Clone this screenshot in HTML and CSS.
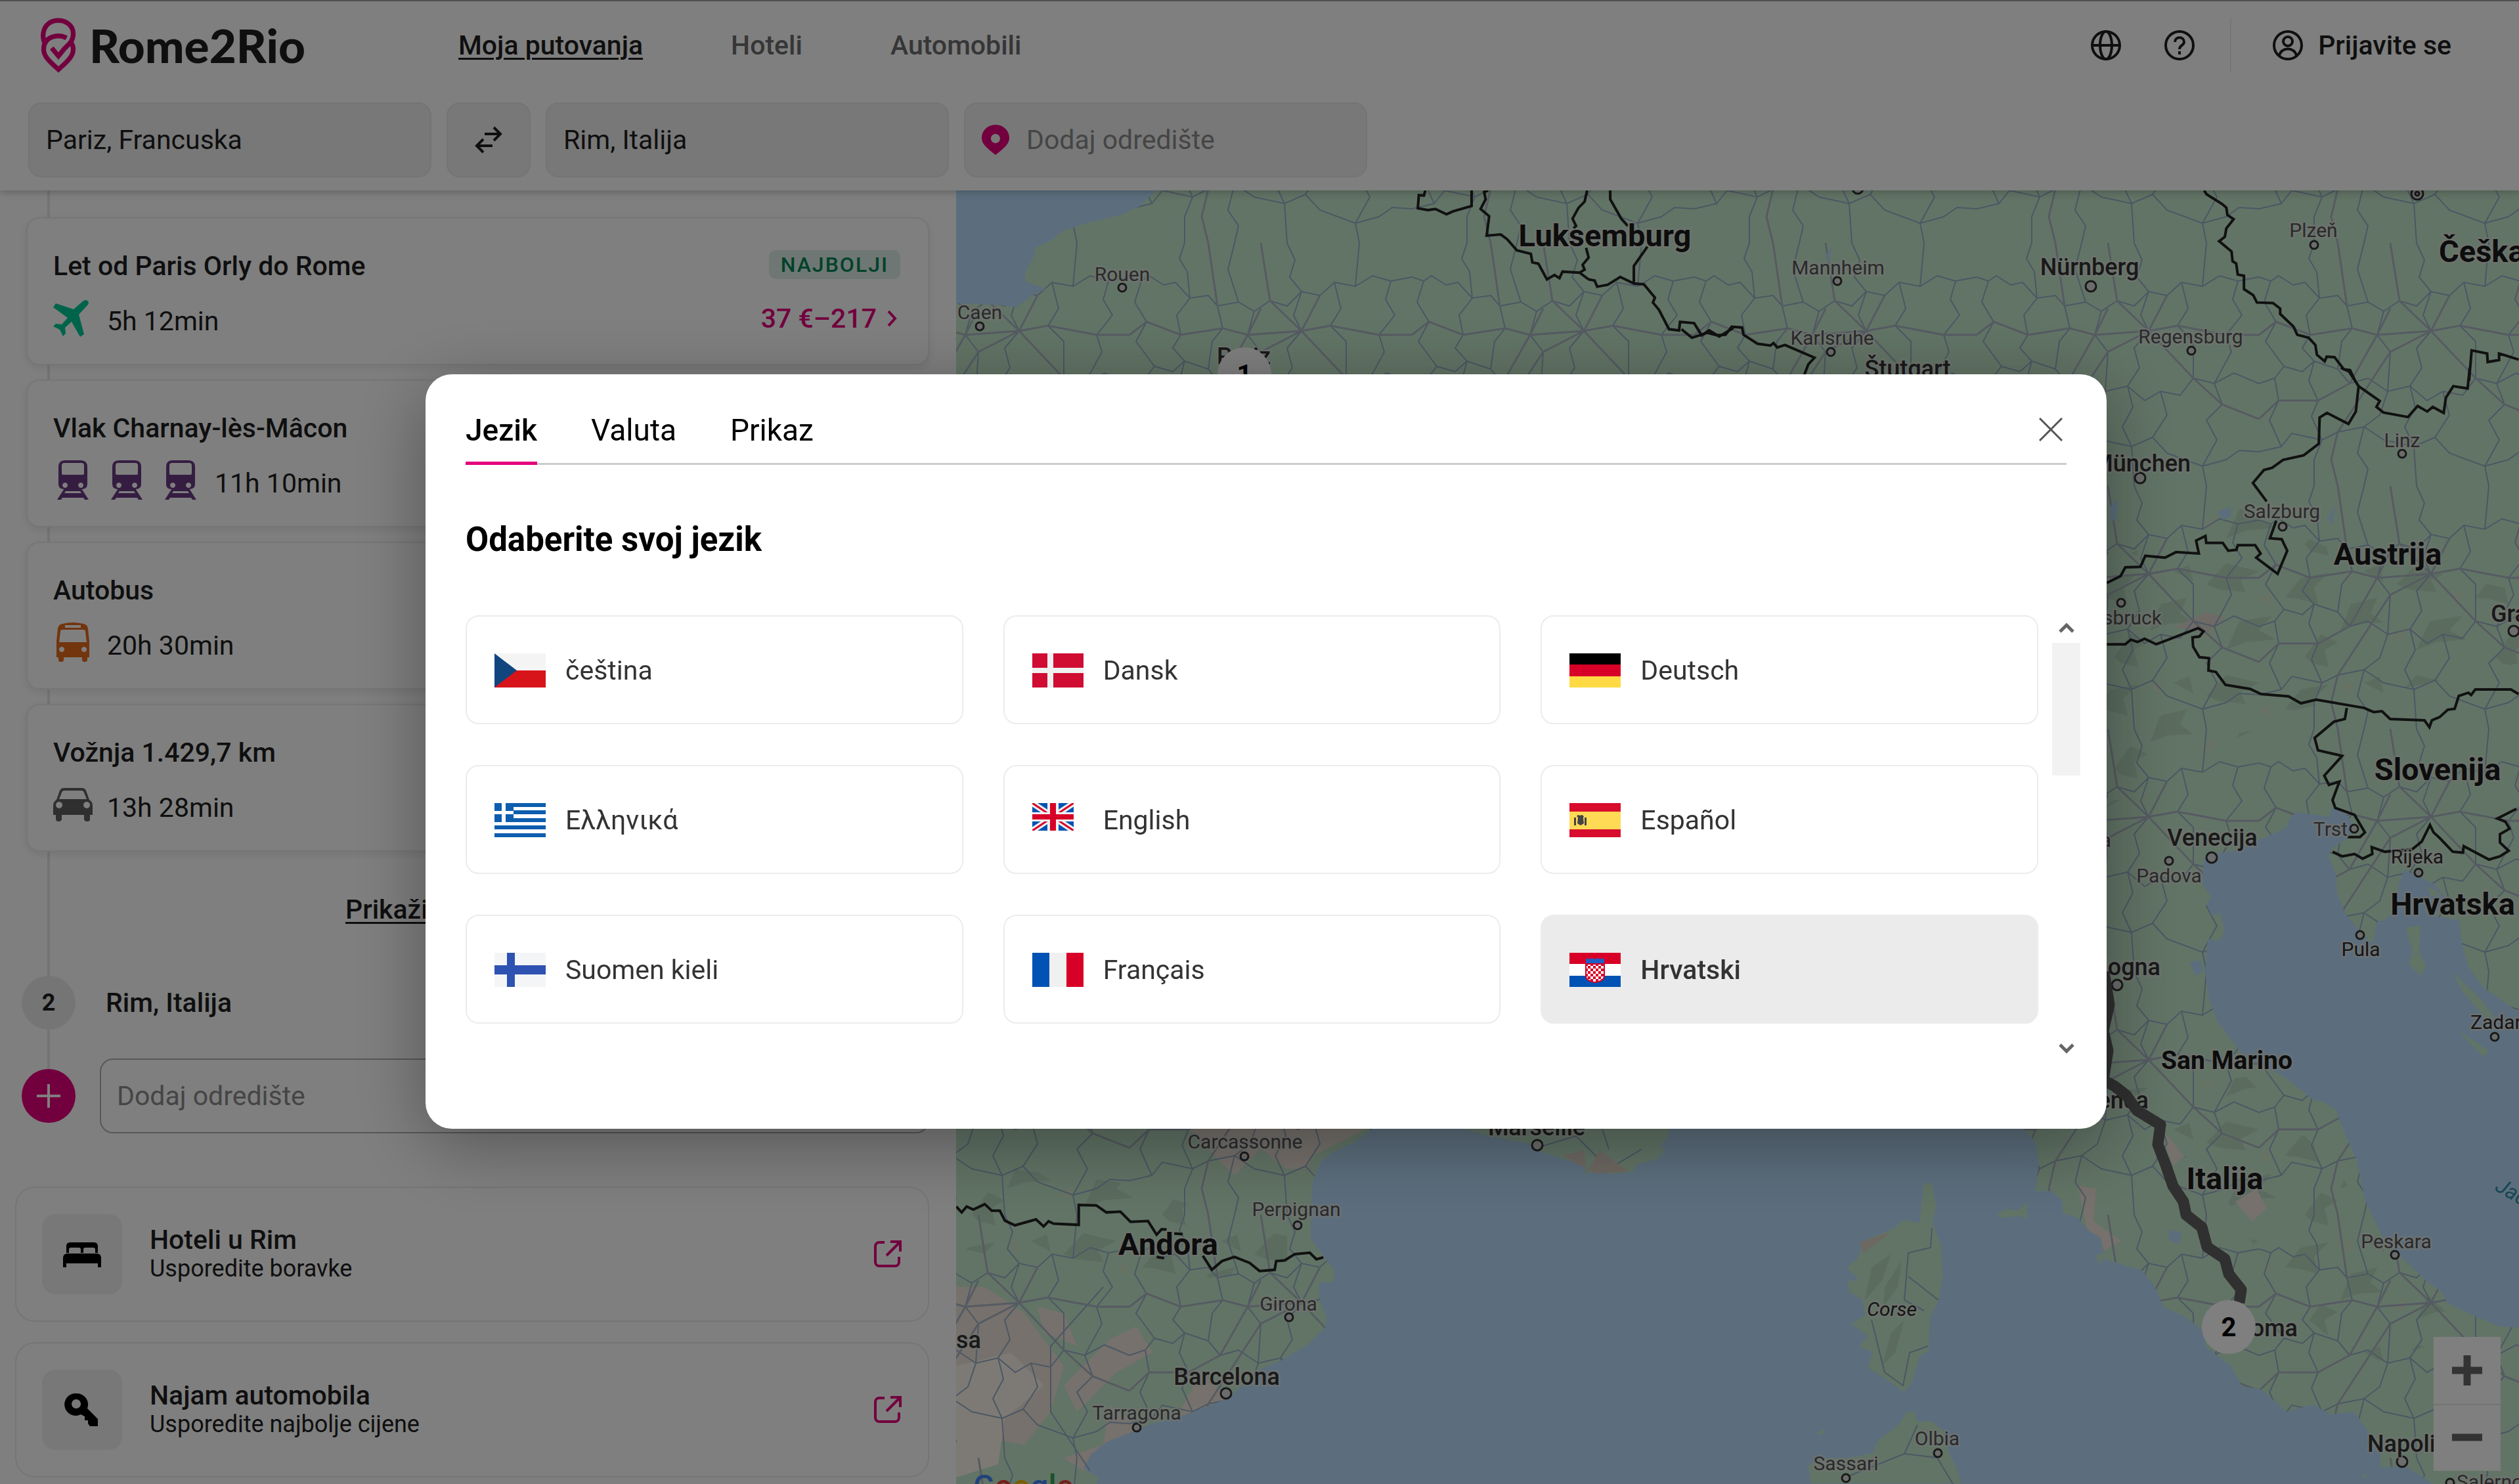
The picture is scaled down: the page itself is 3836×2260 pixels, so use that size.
FILE: index.html
```html
<!DOCTYPE html>
<html lang="hr">
<head>
<meta charset="utf-8">
<meta name="viewport" content="width=device-width, initial-scale=1">
<title>Rome2Rio</title>
<link rel="stylesheet" href="styles.css">
</head>
<body>
<svg class="sprite" aria-hidden="true">
  <symbol id="train" viewBox="0 0 60 60">
    <path fill-rule="evenodd" d="M18 0h24q10 0 10 10v26q0 8-9 8H17q-9 0-9-8V10Q8 0 18 0zM17 4q-4 0-4 4v12q0 2 2 2h30q2 0 2-2V8q0-4-4-4zM18 34a4 4 0 1 0 .1 0zM42 34a4 4 0 1 0 .1 0z"/>
    <path fill-rule="evenodd" d="M17 43h26l11 17h-6l-2-3H14l-2 3H6zM19 47l-2 3h26l-2-3z"/>
  </symbol>
  <symbol id="external" viewBox="0 0 44 44">
    <path d="M17 4H9a6 6 0 0 0-6 6v24a6 6 0 0 0 6 6h24a6 6 0 0 0 6-6v-8M26 3h15v15M40 4 20 24" fill="none" stroke="currentColor" stroke-width="4"/>
  </symbol>
</svg>

<header class="header">
  <div class="topbar">
    <a class="logo" href="#">
      <svg class="logo-pin" viewBox="0 0 52 82" aria-hidden="true">
        <path d="M6 38C3 33 3 27 3.500 23C5 11 14 4 26 4C38 4 48 12 48 24C48 36 40 40 34 47L26 57L16 45M38 30C26 24 4 27 4 47C4 58 14 66 26 77C38 66 48 58 48 47C48 43 47 40 45 37" fill="none" stroke="currentColor" stroke-width="7"/>
      </svg>
      <span>Rome2Rio</span>
    </a>
    <nav class="nav">
      <a class="current" href="#">Moja putovanja</a>
      <a href="#">Hoteli</a>
      <a href="#">Automobili</a>
    </nav>
    <div class="tools">
      <button class="icon-button" aria-label="Jezik">
        <svg viewBox="0 0 48 48"><g fill="none" stroke="currentColor" stroke-width="4"><circle cx="24" cy="24" r="21"/><ellipse cx="24" cy="24" rx="9" ry="21"/><path d="M3 24h42"/></g></svg>
      </button>
      <button class="icon-button" aria-label="Pomoć">
        <svg viewBox="0 0 48 48"><g fill="none" stroke="currentColor" stroke-width="4"><circle cx="24" cy="24" r="21"/><path d="M17 19c0-9 14-9 14 0 0 5-7 5-7 11M24 33v5"/></g></svg>
      </button>
      <span class="divider"></span>
      <button class="sign-in">
        <svg viewBox="0 0 48 48" aria-hidden="true"><g fill="none" stroke="currentColor" stroke-width="4"><circle cx="24" cy="24" r="21"/><circle cx="24" cy="18" r="7"/><path d="M11 40c2-14 24-14 26 0"/></g></svg>
        <span>Prijavite se</span>
      </button>
    </div>
  </div>
  <form class="search">
    <input class="field" type="text" value="Pariz, Francuska" aria-label="Polazište">
    <button class="swap" type="button" aria-label="Zamijeni">
      <svg viewBox="0 0 44 42" aria-hidden="true"><path d="M16 12h24M30 2l10 10-10 10M28 30H4M14 20 4 30l10 10" fill="none" stroke="currentColor" stroke-width="4"/></svg>
    </button>
    <input class="field" type="text" value="Rim, Italija" aria-label="Odredište">
    <label class="field field-add">
      <svg viewBox="0 0 42 46" aria-hidden="true"><path fill-rule="evenodd" d="M21 0C9 0 0 9 0 20c0 10 9 16 21 26 12-10 21-16 21-26C42 9 33 0 21 0zm0 14a7 7 0 1 1-.1 0z"/></svg>
      <input type="text" placeholder="Dodaj odredište" aria-label="Dodaj odredište">
    </label>
  </form>
</header>

<main class="main">
  <section class="sidebar">
    <div class="timeline">
      <div class="routes">
        <article class="route">
          <div class="row"><h3>Let od Paris Orly do Rome</h3><span class="badge">NAJBOLJI</span></div>
          <div class="row detail">
            <div class="modes">
              <svg class="plane" viewBox="0 0 60 60" aria-hidden="true"><path d="M52 4c3 1 2 5 0 7L39 25l8 30-6 4-13-23-10 9 1 9-4 4-5-10-10-5 4-4 9 1 9-10L0 14l4-6 27 9L45 5c2-2 5-3 7-1z"/></svg>
              <span>5h 12min</span>
            </div>
            <a class="price" href="#">37 €–217<svg viewBox="0 0 16 28" aria-hidden="true"><path d="M3 3l10 11L3 25" fill="none" stroke="currentColor" stroke-width="4"/></svg></a>
          </div>
        </article>
        <article class="route">
          <div class="row"><h3>Vlak Charnay-lès-Mâcon</h3></div>
          <div class="row detail"><div class="modes">
            <svg class="train" aria-hidden="true"><use href="#train"/></svg>
            <svg class="train" aria-hidden="true"><use href="#train"/></svg>
            <svg class="train" aria-hidden="true"><use href="#train"/></svg>
            <span>11h 10min</span>
          </div></div>
        </article>
        <article class="route">
          <div class="row"><h3>Autobus</h3></div>
          <div class="row detail"><div class="modes">
            <svg class="bus" viewBox="0 0 60 60" aria-hidden="true"><path fill-rule="evenodd" d="M14 2q16-4 32 0 6 1 7 7l2 20v24h-3v4q0 3-4 3t-4-3v-4H16v4q0 3-4 3t-4-3v-4H5V29L7 9q1-6 7-7zM18 4v4h24V4zM14 11q-3 0-3 3L9 30h42l-2-16q0-3-3-3zM13 37a4 4 0 1 0 .1 0zM47 37a4 4 0 1 0 .1 0z"/></svg>
            <span>20h 30min</span>
          </div></div>
        </article>
        <article class="route">
          <div class="row"><h3>Vožnja 1.429,7 km</h3></div>
          <div class="row detail"><div class="modes">
            <svg class="car" viewBox="0 0 60 60" aria-hidden="true"><path fill-rule="evenodd" d="M16 5h28q4 0 6 4l5 14q5 3 5 9v14h-4v7q0 3-4 3-5 0-5-4v-6H13v6q0 4-5 4-4 0-4-4v-6H0V32q0-6 5-9l5-14q2-4 6-4zM17 9q-3 0-4 3L9 22h42l-4-10q-1-3-4-3zM9 26a5 5 0 1 0 .1 0zM51 26a5 5 0 1 0 .1 0z"/></svg>
            <span>13h 28min</span>
          </div></div>
        </article>
      </div>
      <a class="more" href="#">Prikaži više opcija</a>
      <div class="stop"><span class="dot">2</span><h3>Rim, Italija</h3></div>
      <div class="stop stop-add">
        <button class="dot dot-add" aria-label="Dodaj"><svg viewBox="0 0 38 38"><path d="M19 1v36M1 19h36" stroke="currentColor" stroke-width="4"/></svg></button>
        <input type="text" placeholder="Dodaj odredište" aria-label="Dodaj odredište">
      </div>
    </div>
    <div class="offers">
      <a class="offer" href="#">
        <span class="tile"><svg viewBox="0 0 60 60" aria-hidden="true"><path fill-rule="evenodd" d="M12 12h36q6 0 6 6v10h-4v-5q0-3-3-3H35q-3 0-3 3v5h-4v-5q0-3-3-3H13q-3 0-3 3v5H6V18q0-6 6-6zM8 29h44q7 0 7 7v14h-5v-6H6v6H1V36q0-7 7-7z"/></svg></span>
        <span class="offer-text"><strong>Hoteli u Rim</strong><span>Usporedite boravke</span></span>
        <svg class="external" aria-hidden="true"><use href="#external"/></svg>
      </a>
      <a class="offer" href="#">
        <span class="tile"><svg viewBox="0 0 60 60" aria-hidden="true"><path fill-rule="evenodd" d="M22 5a17 17 0 0 1 16 23l16 16v11H42l-3-4v-5h-5v-6l-6-3A17 17 0 1 1 22 5zm-1 9a7 7 0 1 0 .1 0z"/></svg></span>
        <span class="offer-text"><strong>Najam automobila</strong><span>Usporedite najbolje cijene</span></span>
        <svg class="external" aria-hidden="true"><use href="#external"/></svg>
      </a>
    </div>
  </section>

  <section class="map" aria-label="Karta">
    <svg class="map-canvas" viewBox="1456 290 2380 1970" preserveAspectRatio="xMidYMid slice">
      <defs>
        <pattern id="roads" width="430" height="370" patternUnits="userSpaceOnUse">
          <g fill="none" stroke="#98aec8" stroke-width="2">
            <path d="M0 52L18 58 30 50 52 64 70 60 92 84 120 80 134 96 166 90 190 104 214 88 240 96 262 74 290 80 312 60 344 66 370 50 398 58 430 52"/>
            <path d="M0 214L24 206 38 188 66 196 84 180 120 192 138 214 166 206 196 226 230 218 256 240 280 226 310 232 330 206 362 214 392 198 430 214"/>
            <path d="M84 0L76 24 88 44 92 84 72 110 78 140 66 160 84 180 76 210 90 240 80 264 96 300 84 330 84 370"/>
            <path d="M240 0L252 26 244 52 262 74 250 110 262 134 240 160 248 190 230 218 238 250 222 280 236 310 240 370"/>
            <path d="M398 58L390 86 404 110 380 140 388 166 362 214 374 246 350 270 366 300 344 340 350 370M350 0L344 66"/>
            <path d="M134 96L142 130 126 150 120 192M312 60L322 100 306 126 330 150 330 206M190 104L180 140 200 166 196 226 184 262 160 280 150 320 166 344 160 370M160 0L150 40 166 90"/>
            <path d="M0 318L34 310 50 290 96 300 120 288 160 280 190 300 236 310 268 296 290 320 344 340 380 330 400 316 430 318M280 226L290 262 268 296M24 206L30 240 16 270 34 310M18 58L8 90 26 120 10 150 38 188"/>
          </g>
          <g fill="none" stroke="#acb6c4" stroke-width="3">
            <path d="M0 140L26 120 78 140 142 130 180 140 262 134 306 126 380 140 430 140M200 0L214 88 262 134 330 206 374 246 430 268M0 268L30 240 90 240 138 214 180 140 200 100M290 80L262 134 200 166 120 288 110 330 120 370M120 0L134 96"/>
          </g>
        </pattern>
        <pattern id="relief" width="290" height="170" patternUnits="userSpaceOnUse">
          <path fill="#b6d8be" d="M0 60L24 30 66 22 44 44 50 70 20 62zM84 110L100 70 140 60 130 84 150 98 112 100zM170 40L200 8 250 20 222 34 230 52 190 48zM200 140L220 96 270 88 250 110 276 124 230 128zM30 150L54 116 80 128 60 140 66 166 40 160zM120 20L144 10 150 36z"/>
          <path fill="#cfe4ca" d="M84 24L104 18 98 40zM160 120L186 104 180 126zM250 60L270 50 264 74z"/>
        </pattern>
      </defs>
      <rect x="1456" y="290" width="2380" height="1970" fill="#c4e8cc"/>
      <path fill="url(#relief)" d="M3208 860L3400 770 3560 840 3836 900V1010L3700 1040 3500 1080 3330 1160 3208 1230zM1456 1770L1700 1800 1960 1880 1960 1930 1740 1960 1456 1900zM3230 1660L3420 1640 3560 1780 3640 1920 3760 2030 3600 2080 3480 1980 3400 1840z"/>
      <g fill="#ece2d8">
        <path d="M1456 1960L1500 1960 1560 2000 1620 2080 1600 2150 1560 2200 1500 2190 1456 2100zM1580 1990L1620 2000 1640 2050 1590 2030zM1690 2040L1730 2020 1755 2060 1700 2090 1640 2150 1620 2110zM1810 1719H2080L2000 1760 1990 1780 1960 1780 1920 1750 1880 1790 1850 1760zM1790 2160L1830 2090 1870 2130zM1680 2200L1690 2140 1740 2180 1650 2240 1620 2220zM3290 1716L3325 1760 3310 1775 3300 1750zM3404 1830L3436 1810 3452 1840 3430 1860zM3164 1806L3192 1810 3188 1860 3230 1890 3205 1904 3178 1870z"/>
        <path fill="#faf4ea" d="M1456 2080L1540 2060 1590 2110 1530 2160 1520 2230 1456 2250z"/>
        <path fill="#dcd4cc" d="M3312 955L3360 932 3388 940 3360 964z"/>
      </g>
      <rect x="1456" y="290" width="2380" height="1970" fill="url(#roads)"/>
      <g fill="#b8dcfa">
        <path d="M1456 290H1761L1735 314 1708 327 1654 340 1620 351 1601 366 1576 378 1574 392 1561 414 1562 429 1593 440 1574 449 1547 468 1516 464 1456 462z"/>
        <path d="M2091 1600V1719L2064 1739 2029 1755 2010 1771 1999 1800 1997 1825 1996 1886 2014 1911 2033 1936 2031 1952 2008 1954 2010 1982 2020 2004 2019 2021 1991 2048 1953 2071 1922 2084 1869 2130 1807 2154 1746 2171 1716 2184 1685 2196 1662 2214 1650 2236 1673 2250 1670 2260H3704L3692 2251 3664 2233 3625 2235 3625 2213 3605 2178 3585 2150 3550 2154 3522 2139 3483 2150 3443 2116 3414 2111 3396 2079 3361 2053 3353 2024 3325 2004 3294 1990 3282 1960 3262 1935 3203 1917V1903L3199 1885 3179 1873 3164 1854 3142 1848 3140 1828 3124 1814H3099L3105 1770 3099 1739 3082 1719V1600z"/>
        <path d="M3368 1300L3356 1307 3354 1346 3368 1367 3360 1377 3368 1395 3381 1391 3388 1419 3379 1433 3362 1430 3358 1479 3364 1521 3377 1556 3414 1605 3465 1633 3479 1640 3522 1674 3542 1680 3558 1691 3566 1715 3589 1767 3601 1826 3617 1861 3633 1893 3664 1921 3696 1952 3719 1968 3727 1984 3763 2002 3806 2020 3836 2022V1542L3782 1504 3759 1472 3749 1437 3745 1402 3707 1395 3724 1367 3707 1346 3678 1332 3661 1325 3653 1346 3649 1381 3636 1398 3619 1405 3613 1437 3594 1419 3571 1391 3559 1360 3557 1332 3546 1304 3550 1293 3575 1276 3586 1261 3573 1240 3550 1230 3548 1244 3498 1237 3488 1244 3481 1261 3431 1283 3398 1297z"/>
        <path d="M3214 770L3226 760 3222 790 3214 796zM3376 780L3396 772 3398 786 3386 792zM3545 790L3556 770 3552 800zM3334 1466L3350 1462 3356 1478 3344 1486zM3302 1874L3322 1876 3318 1894 3304 1890zM2782 386L2790 376 2784 404z"/>
      </g>
      <g fill="#c4e8cc">
        <path d="M2228 1719L2266 1730 2335 1743 2347 1754 2412 1775 2416 1789 2435 1777 2454 1788 2488 1784 2492 1773 2527 1764 2534 1750 2527 1745 2538 1734 2542 1719z"/>
        <path transform="translate(2600 1640) scale(.788 .395)" d="M418 410L435 410 442 500 435 560 452 650 455 770 447 860 430 930 428 1055 410 1080 395 1180 380 1215 345 1165 310 1120 320 1060 293 1040 310 1000 278 950 305 920 300 860 275 830 270 790 292 780 270 735 290 700 305 630 360 585 380 550 410 565zM560 530L575 510 600 515 618 485V545L600 535 570 545zM385 1292H402L405 1330 430 1325 455 1360 465 1440 480 1500 490 1568H200L195 1500 215 1470 270 1470 320 1450 330 1400 370 1340zM210 1375L225 1355 222 1380zM748 690L765 680 762 725zM1265 1535L1275 1530 1272 1550z"/>
        <path d="M3664 1412L3686 1410 3684 1450 3694 1470 3686 1486 3668 1468 3674 1450zM3734 1480L3780 1524 3800 1550 3786 1552 3750 1510zM3744 1570L3790 1600 3782 1610zM3812 1500L3836 1512V1522zM3696 1350L3720 1362 3702 1366z"/>
      </g>
      <g fill="#b6d8be">
        <path d="M2850 1930L2880 1910 2866 1950 2840 1980zM2870 1960L2896 1920 2890 1960 2868 1990zM2880 2030L2900 2010 2886 2060 2866 2080z"/>
      </g>
      <g fill="none" stroke="#98aec8" stroke-width="2">
        <path d="M2942 1870L2940 1900 2906 1908 2900 1980 2930 1996M2906 1944L2952 1980M2850 2010L2870 2090 2898 2110 2908 2060 2936 2050M2920 2170L2900 2214 2950 2220 2974 2260M2810 2250L2900 2214M2350 1745L2400 1730 2450 1780 2500 1750M2440 1719L2450 1750M1660 2240L1600 2150 1600 2050 1680 1960"/>
      </g>
      <path fill="#dcd0c4" d="M2832 1892L2880 1876 2862 1890 2838 1908zM2380 1760L2412 1752 2416 1787 2436 1752 2480 1784 2430 1787z"/>
      <g class="borders">
        <path transform="translate(1440 0) scale(.765 .37)" d="M955 784L952 805 942 803 940 857 960 865 975 860 997 882 1010 870 1047 848V784M1080 784L1072 790 1075 820 1065 860 1082 890 1077 970 1105 965 1118 985 1137 1030 1165 1045 1168 1080 1180 1085 1197 1150 1212 1132 1222 1145 1228 1118 1262 1122 1280 1150 1292 1155 1297 1180 1318 1172 1343 1140 1370 1167 1390 1170 1412 1225 1408 1245 1420 1275 1440 1355 1460 1360 1462 1325 1490 1330 1505 1380 1520 1360 1540 1385 1568 1350M1277 784L1272 830 1260 855 1248 900 1255 930 1250 940M1323 784V820L1345 900 1358 930M1275 1020L1280 1060 1268 1090 1272 1110 1262 1122M1397 1015L1370 1095V1167"/>
        <path transform="translate(2600 0) scale(.788 .37)" d="M-50 1355L-30 1390 0 1370 18 1380 35 1378 47 1345 67 1348 70 1378 97 1415 122 1422 128 1412 135 1430 150 1420 207 1472 195 1500 187 1545M960 784L965 800 995 840 1003 855 1005 885 1017 902 1003 940 1000 975 989 993 1013 1035 1015 1075 1022 1085 1025 1130 1037 1135V1190L1055 1215 1062 1245 1093 1247 1107 1270V1292L1133 1345 1140 1378 1162 1390 1175 1420 1178 1460 1193 1487 1197 1468 1212 1470 1230 1520 1242 1523 1252 1568M1472 1568L1477 1442 1507 1455 1508 1490 1530 1482V1455L1568 1480"/>
        <path transform="translate(3180 560) scale(.418 .702)" d="M920 0L950 8 985 40 975 95 948 122 870 98 843 108 840 165 785 190 710 200 670 217 640 222 600 250 650 290M985 40L1062 72 1050 85 1075 97 1165 107 1200 83 1235 95 1255 85 1295 98 1303 65 1330 40 1382 45 1390 0M685 332L662 370 705 372 725 397 690 447 612 412 628 403 608 385 545 385 540 395 510 397 490 380 430 380 427 365 393 375 403 403 320 400 280 412 208 408 190 432 135 433 118 452 68 467M68 600L135 600 155 590 180 595 205 588 248 600 400 565 420 572 405 583 380 585 382 605 405 628 440 630 438 657 465 660 500 688 590 697 630 708 730 713 775 728 830 720 1005 738 1040 747 1070 745 1100 762 1225 765 1243 780 1252 765 1280 758 1310 742 1335 740 1350 712 1385 705 1395 710 1410 698 1540 698 1568 708M942 738L935 762 895 768 825 803 837 830 925 842 860 885 877 905 915 898 890 938 900 955 970 970 1008 1008 990 1018 945 1018M890 1050L925 1060 970 1055 1000 1065 1035 1055 1033 1040 1080 1050 1180 1045 1215 1028 1245 992 1258 1008 1280 1020 1328 1050 1365 1052 1368 1038 1460 1067 1500 1060 1532 1048 1500 1030V1012L1535 1000 1520 985 1490 978 1560 957"/>
        <path transform="translate(1440 1700) scale(.765 .357)" d="M21 385L32 410 42 385 55 398 78 375 92 403 108 403 118 445 138 465 180 440 195 470 205 448 215 458 265 463V378L300 380 320 410 348 407 368 450 403 447 420 505 430 482 440 483M455 500L472 503M420 600L435 605M512 595L530 655 550 618 575 600 605 625 625 660 655 655 658 618 675 615 695 588 725 582 738 610 752 602"/>
      </g>
      <g class="places">
        <circle cx="1492" cy="497" r="6"/><circle cx="1709" cy="438" r="6"/><circle cx="2798" cy="428" r="6"/><circle cx="2788" cy="536" r="6"/><circle cx="3337" cy="534" r="6"/><circle cx="3524" cy="373" r="6"/><circle cx="3476" cy="802" r="6"/><circle cx="3658" cy="691" r="6"/><circle cx="3230" cy="918" r="6"/><circle cx="3303" cy="1311" r="6"/><circle cx="3585" cy="1262" r="6"/><circle cx="3683" cy="1329" r="6"/><circle cx="3594" cy="1424" r="6"/><circle cx="3799" cy="1579" r="6"/><circle cx="3647" cy="1911" r="6"/><circle cx="2951" cy="2213" r="6"/><circle cx="2811" cy="2251" r="6"/><circle cx="1895" cy="1761" r="6"/><circle cx="1976" cy="1866" r="6"/><circle cx="1963" cy="2006" r="6"/><circle cx="1731" cy="2174" r="6"/><circle cx="3731" cy="2258" r="6"/>
        <circle cx="3184" cy="436" r="8"/><circle cx="3259" cy="728" r="8"/><circle cx="3828" cy="961" r="8"/><circle cx="3368" cy="1306" r="8"/><circle cx="3224" cy="1500" r="8"/><circle cx="3658" cy="2226" r="8"/><circle cx="2341" cy="1744" r="8"/><circle cx="1867" cy="2122" r="8"/><circle cx="2829" cy="287" r="8"/><circle cx="3681" cy="295" r="9"/><circle cx="3681" cy="295" r="3"/>
      </g>
      <g class="label town">
        <text x="1492" y="486">Caen</text><text x="1709" y="428">Rouen</text><text x="2799" y="418">Mannheim</text><text x="2790" y="525">Karlsruhe</text><text x="3336" y="523">Regensburg</text><text x="3523" y="361">Plzeň</text><text x="3475" y="789">Salzburg</text><text x="3658" y="681">Linz</text><text class="end" x="3292" y="951">Innsbruck</text><text x="3303" y="1344">Padova</text><text x="3549" y="1273">Trst</text><text class="dark" x="3681" y="1315">Rijeka</text><text class="dark" x="3595" y="1456">Pula</text><text class="end" x="3215" y="1290">Verona</text><text class="start dark" x="3762" y="1567">Zadar</text><text x="3649" y="1901">Peskara</text><text x="2950" y="2201">Olbia</text><text x="2811" y="2239">Sassari</text><text class="dark italic" x="2881" y="2004">Corse</text><text x="1896" y="1749">Carcassonne</text><text x="1974" y="1852">Perpignan</text><text x="1962" y="1996">Girona</text><text x="1731" y="2162">Tarragona</text><text class="start" x="3741" y="2267">Salerno</text>
      </g>
      <g class="label city">
        <text x="1894" y="555">Pariz</text><text x="2905" y="574">Štutgart</text><text x="3182" y="419">Nürnberg</text><text class="end" x="3336" y="718">München</text><text class="start" x="3793" y="947">Graz</text><text x="3369" y="1288">Venecija</text><text class="end" x="3290" y="1485">Bologna</text><text class="end" x="3272" y="1688">Firenca</text><text class="end" x="3499" y="2035">Roma</text><text class="start" x="3605" y="2211">Napoli</text><text x="2340" y="1729">Marseille</text><text class="end" x="1494" y="2053">Saragosa</text><text x="1868" y="2109">Barcelona</text>
      </g>
      <path class="track" d="M3204 1480L3212 1530 3203 1570 3210 1600 3203 1645 3220 1654 3238 1668 3254 1691 3290 1713 3286 1743 3298 1774 3309 1806 3325 1830 3329 1850 3353 1869 3361 1899 3388 1917 3394 1940 3413 1964 3410 1984"/>
      <g class="label country">
        <text x="2444" y="375">Luksemburg</text><text class="start" x="3714" y="399">Češka</text><text x="3636" y="860">Austrija</text><text x="3712" y="1188">Slovenija</text><text x="3735" y="1393">Hrvatska</text><text x="3388" y="1811">Italija</text><text x="1779" y="1911">Andora</text><text class="small" x="3391" y="1628">San Marino</text>
      </g>
      <text class="sea" transform="translate(3798 1812) rotate(30)">Jadransko more</text>
      <text class="google" x="1482" y="2280"><tspan fill="#4285f4">G</tspan><tspan fill="#ea4335">o</tspan><tspan fill="#fbbc05">o</tspan><tspan fill="#4285f4">g</tspan><tspan fill="#34a853">l</tspan><tspan fill="#ea4335">e</tspan></text>
      <g class="pin">
        <circle cx="1895" cy="570" r="41"/><text x="1895" y="584">1</text>
        <circle cx="3394" cy="2021" r="41"/><text x="3394" y="2035">2</text>
      </g>
    </svg>
    <div class="zoom">
      <button aria-label="Povećaj"><svg viewBox="0 0 46 46"><path d="M23 0v46M0 23h46"/></svg></button>
      <button aria-label="Smanji"><svg viewBox="0 0 46 46"><path d="M0 23h46"/></svg></button>
    </div>
  </section>
</main>

<div class="backdrop">
  <div class="modal" role="dialog" aria-modal="true" aria-labelledby="modal-title">
    <div class="modal-head">
      <div class="tabs" role="tablist">
        <button class="tab selected" role="tab" aria-selected="true">Jezik</button>
        <button class="tab" role="tab">Valuta</button>
        <button class="tab" role="tab">Prikaz</button>
      </div>
      <button class="close" aria-label="Zatvori"><svg viewBox="0 0 36 36"><path d="M1 1l34 34M35 1L1 35" stroke="currentColor" stroke-width="3"/></svg></button>
    </div>
    <h2 id="modal-title">Odaberite svoj jezik</h2>
    <div class="scroller">
      <div class="languages">
        <button class="language"><svg class="flag" viewBox="0 0 78 52"><path fill="#f4f4f4" d="M0 0h78v26H0z"/><path fill="#d7141a" d="M0 26h78v26H0z"/><path fill="#11457e" d="M0 0l34 26L0 52z"/></svg>čeština</button>
        <button class="language"><svg class="flag" viewBox="0 0 78 52"><path fill="#d00c33" d="M0 0h78v52H0z"/><path fill="#f0f0f0" d="M23 0h9v52h-9zM0 22h78v8H0z"/></svg>Dansk</button>
        <button class="language"><svg class="flag" viewBox="0 0 78 52"><path d="M0 0h78v17H0z"/><path fill="#d80027" d="M0 17h78v18H0z"/><path fill="#ffda44" d="M0 35h78v17H0z"/></svg>Deutsch</button>
        <button class="language"><svg class="flag" viewBox="0 0 78 52"><path fill="#fff" d="M0 0h78v52H0z"/><path fill="#0d5eaf" d="M0 0h78v6H0zM0 11h78v6H0zM0 23h78v6H0zM0 34h78v6H0zM0 46h78v6H0zM0 0h29v29H0z"/><path fill="#fff" d="M11 0h6v29h-6zM0 12h29v5H0z"/></svg>Ελληνικά</button>
        <button class="language"><svg class="flag" viewBox="0 0 78 52"><svg width="63" height="42" viewBox="0 0 63 42"><path fill="#0052b4" d="M0 0h63v42H0z"/><path d="M0 0l63 42M63 0L0 42" stroke="#f0f0f0" stroke-width="9"/><path d="M0 0l63 42M63 0L0 42" stroke="#d80027" stroke-width="3"/><path fill="#f0f0f0" d="M23 0h17v42H23zM0 14h63v14H0z"/><path fill="#d80027" d="M27 0h9v42h-9zM0 17h63v8H0z"/></svg></svg>English</button>
        <button class="language"><svg class="flag" viewBox="0 0 78 52"><path fill="#d80c2c" d="M0 0h78v52H0z"/><path fill="#ffda55" d="M0 13h78v27H0z"/><path fill="#444" d="M7 22h3v12H7zM23 22h3v12h-3zM11 20l2-2 3 1 3-1 3 2-1 2 1 9-5 3-5-3 1-9z"/></svg>Español</button>
        <button class="language"><svg class="flag" viewBox="0 0 78 52"><path fill="#f4f5f7" d="M0 0h78v52H0z"/><path fill="#2e52b2" d="M19 0h12v52H19zM0 19h78v14H0z"/></svg>Suomen kieli</button>
        <button class="language"><svg class="flag" viewBox="0 0 78 52"><path fill="#0052b4" d="M0 0h26v52H0z"/><path fill="#f0f0f0" d="M26 0h26v52H26z"/><path fill="#d80027" d="M52 0h26v52H52z"/></svg>Français</button>
        <button class="language chosen"><svg class="flag" viewBox="0 0 78 52"><defs><pattern id="checks" width="8" height="8" patternUnits="userSpaceOnUse"><path fill="#fff" d="M0 0h8v8H0z"/><path fill="#d80027" d="M0 0h4v4H0zM4 4h4v4H4z"/></pattern></defs><path fill="#fff" d="M0 0h78v52H0z"/><path fill="#d80027" d="M0 0h78v17H0z"/><path fill="#0052b4" d="M0 35h78v17H0z"/><path fill="url(#checks)" stroke="#d80027" stroke-width="2" d="M25 17h28v18q0 8-14 10-14-2-14-10z"/><path fill="#1d5fc4" d="M25 10l3-2 3 2 4-2 4 2 4-2 4 2 3-2 3 2v6H25z"/></svg>Hrvatski</button>
      </div>
      <div class="scrollbar" aria-hidden="true">
        <svg viewBox="0 0 24 18"><path d="M2 15L12 5l10 10" fill="none" stroke="currentColor" stroke-width="5"/></svg>
        <span class="thumb"></span>
        <svg class="down" viewBox="0 0 24 18"><path d="M2 3l10 10L22 3" fill="none" stroke="currentColor" stroke-width="5"/></svg>
      </div>
    </div>
  </div>
</div>
</body>
</html>
```
FILE: styles.css
```css
* { box-sizing: border-box; }

body {
  margin: 0;
  height: 100vh;
  display: flex;
  flex-direction: column;
  overflow: hidden;
  background: #fff;
  color: #1e1e20;
  font: 400 41px/48px Roboto, "Noto Sans", sans-serif;
}

h2, h3 { margin: 0; }
h3 { font-size: 41px; font-weight: 500; }
a { color: inherit; text-decoration: none; }
svg { display: block; flex: none; }
button {
  margin: 0;
  padding: 0;
  border: 0;
  background: none;
  color: inherit;
  font: inherit;
  cursor: pointer;
}
input { font: inherit; color: inherit; min-width: 0; }
input::placeholder { color: #8a8a8a; opacity: 1; }
.sprite { position: absolute; width: 0; height: 0; }

/* Header */
.header {
  position: relative;
  z-index: 1;
  flex: none;
  border-top: 2px solid #a0a0a0;
  background: #fff;
  box-shadow: 0 2px 12px rgba(0, 0, 0, .25);
}
.topbar {
  display: flex;
  align-items: center;
  height: 134px;
  padding: 0 103px 0 62px;
}
.logo {
  display: flex;
  align-items: center;
  gap: 20px;
  width: 636px;
  font: 900 71px/84px Lato, sans-serif;
}
.logo-pin { width: 54px; height: 84px; color: #e4007c; }
.nav { display: flex; gap: 134px; font-weight: 500; color: #6c6c6e; }
.nav .current {
  color: #1e1e20;
  text-decoration: underline;
  text-decoration-thickness: 3px;
  text-underline-offset: 5px;
}
.tools { display: flex; align-items: center; margin-left: auto; }
.tools svg { width: 48px; height: 48px; }
.icon-button { margin-right: 64px; }
.icon-button + .icon-button { margin-right: 53px; }
.divider { width: 2px; height: 84px; background: #ececec; }
.sign-in {
  display: flex;
  align-items: center;
  gap: 22px;
  margin-left: 62px;
  font-weight: 500;
}
.search {
  display: flex;
  gap: 23px;
  padding: 20px 43px;
}
.field, .swap {
  height: 114px;
  border: 2px solid #e8e8e8;
  border-radius: 20px;
  background: #f0f0f0;
}
.field { width: 614px; padding: 0 25px; }
.swap { display: grid; place-items: center; width: 128px; }
.swap svg { width: 44px; height: 42px; }
.field-add { display: flex; align-items: center; gap: 26px; }
.field-add svg { width: 42px; height: 46px; fill: #e4007c; }
.field-add input { flex: 1; padding: 0; border: 0; background: none; }

/* Sidebar */
.main { display: flex; flex: 1; min-height: 0; }
.sidebar {
  z-index: 0;
  flex: none;
  width: 1456px;
  padding: 41px 41px 0 23px;
  overflow: hidden;
}
.timeline { position: relative; }
.timeline::before {
  content: "";
  position: absolute;
  z-index: -1;
  top: -42px;
  bottom: 40px;
  left: 49px;
  width: 4px;
  background: #e8e8e8;
}
.routes { display: flex; flex-direction: column; gap: 22px; margin-left: 17px; }
.route {
  height: 225px;
  padding: 48px 42px 0 39px;
  border: 2px solid #ececec;
  border-radius: 20px;
  background: #fff;
  box-shadow: 0 4px 14px rgba(0, 0, 0, .09);
}
.row { display: flex; justify-content: space-between; }
.detail { height: 70px; margin-top: 25px; line-height: 70px; }
.modes { display: flex; gap: 22px; }
.modes svg { width: 60px; height: 60px; }
.plane { fill: #00c896; }
.train { fill: #6b3a84; }
.bus { fill: #e46a1c; }
.car { fill: #5e5e60; }
.badge {
  height: 44px;
  padding: 0 18px;
  border-radius: 10px;
  background: #deefe9;
  color: #008556;
  font: 500 32px/44px Roboto, sans-serif;
  letter-spacing: 2px;
}
.price {
  display: flex;
  align-items: center;
  gap: 14px;
  height: 62px;
  padding-right: 4px;
  color: #e4007c;
  font-weight: 500;
}
.price svg { width: 18px; height: 28px; }
.more {
  display: block;
  margin: 64px 0 0 503px;
  font-weight: 500;
  text-decoration: underline;
  text-decoration-thickness: 3px;
  text-underline-offset: 5px;
}
.stop { display: flex; align-items: center; gap: 46px; margin: 77px 0 0 10px; }
.dot {
  display: grid;
  place-items: center;
  flex: none;
  width: 82px;
  height: 82px;
  border-radius: 50%;
  background: #ebebeb;
  font-size: 36px;
  font-weight: 700;
}
.dot-add { background: #e4007c; color: #fff; }
.dot-add svg { width: 38px; height: 38px; }
.stop-add { gap: 37px; margin-top: 44px; }
.stop-add input {
  flex: 1;
  height: 114px;
  padding: 0 24px;
  border: 2px solid #b0b0b0;
  border-radius: 20px;
  background: #fff;
}
.offers { display: flex; flex-direction: column; gap: 31px; margin-top: 81px; }
.offer {
  display: flex;
  align-items: center;
  height: 206px;
  padding: 0 39px;
  border: 2px solid #ebebeb;
  border-radius: 30px;
}
.tile {
  display: grid;
  place-items: center;
  width: 122px;
  height: 122px;
  margin-right: 42px;
  border-radius: 20px;
  background: #f0f0f0;
}
.tile svg { width: 60px; height: 60px; }
.offer-text { flex: 1; font-size: 36px; line-height: 44px; }
.offer-text strong, .offer-text span { display: block; }
.offer-text strong { font-size: 41px; font-weight: 500; }
.external { width: 44px; height: 44px; color: #e4007c; }

/* Map */
.map { position: relative; flex: 1; min-width: 0; }
.map-canvas { width: 100%; height: 100%; }
.borders path {
  fill: none;
  stroke: #222;
  stroke-width: 4px;
  vector-effect: non-scaling-stroke;
}
.track { fill: none; stroke: #606060; stroke-width: 17px; stroke-linejoin: round; }
.places circle { fill: #d8d8d8; stroke: #333; stroke-width: 3px; }
.label {
  fill: #555;
  stroke: #e4e6e2;
  stroke-width: 5px;
  stroke-opacity: .7;
  stroke-linejoin: round;
  paint-order: stroke;
  text-anchor: middle;
}
.label .start { text-anchor: start; }
.label .end { text-anchor: end; }
.label .dark { fill: #2c2c2c; }
.label .italic { font-style: italic; }
.town { font-size: 30px; }
.city { fill: #333; font-size: 36px; font-weight: 500; }
.country { fill: #1a1a1a; font-size: 47px; font-weight: 700; }
.country .small { font-size: 39px; }
.sea { fill: #2f8fa8; font-size: 32px; font-style: italic; }
.google { font-size: 48px; font-weight: 500; }
.pin circle { fill: #fff; }
.pin text { font-size: 40px; font-weight: 700; text-anchor: middle; }
.zoom {
  position: absolute;
  right: 28px;
  bottom: 20px;
  width: 102px;
  background: #fff;
}
.zoom button { display: grid; place-items: center; width: 102px; height: 102px; }
.zoom button + button { box-shadow: inset 0 2px #e6e6e6; }
.zoom svg { width: 46px; height: 46px; stroke: #666; stroke-width: 11px; }

/* Language dialog */
.backdrop {
  position: fixed;
  inset: 0;
  z-index: 2;
  display: grid;
  place-items: center;
  padding: 29px 0 0 20px;
  background: rgba(0, 0, 0, .5);
}
.modal {
  width: 2560px;
  max-width: 100%;
  padding: 0 61px 99px;
  border-radius: 40px;
  background: #fff;
  color: #000;
  box-shadow: 0 24px 110px rgba(0, 0, 0, .34);
}
.modal-head {
  display: flex;
  align-items: flex-end;
  justify-content: space-between;
  height: 138px;
  box-shadow: inset 0 -3px #ccc;
}
.tabs { display: flex; gap: 82px; font-size: 46px; line-height: 54px; }
.tab { padding-bottom: 21px; border-bottom: 5px solid transparent; }
.tab.selected { border-color: #e4007c; font-weight: 500; }
.close { padding: 0 6px 36px; color: #555; }
.close svg { width: 36px; height: 36px; }
h2 { margin: 84px 0 85px; font-size: 51px; line-height: 60px; font-weight: 700; }
.scroller { display: flex; gap: 21px; height: 683px; margin-right: -21px; }
.languages {
  flex: 1;
  display: grid;
  grid-template-columns: repeat(3, 1fr);
  grid-auto-rows: 166px;
  gap: 62px 61px;
}
.language {
  display: flex;
  align-items: center;
  gap: 30px;
  padding: 2px 42px 0;
  border: 2px solid #ececec;
  border-radius: 20px;
  color: #333;
}
.language.chosen { background: #ebebeb; font-weight: 500; }
.flag { width: 78px; height: 52px; }
.scrollbar {
  display: flex;
  flex-direction: column;
  align-items: center;
  width: 43px;
  padding: 10px 0 14px;
  color: #666;
}
.scrollbar svg { width: 24px; height: 18px; }
.thumb { width: 43px; height: 202px; margin-top: 14px; background: #f2f2f2; }
.scrollbar .down { margin-top: auto; }
```
